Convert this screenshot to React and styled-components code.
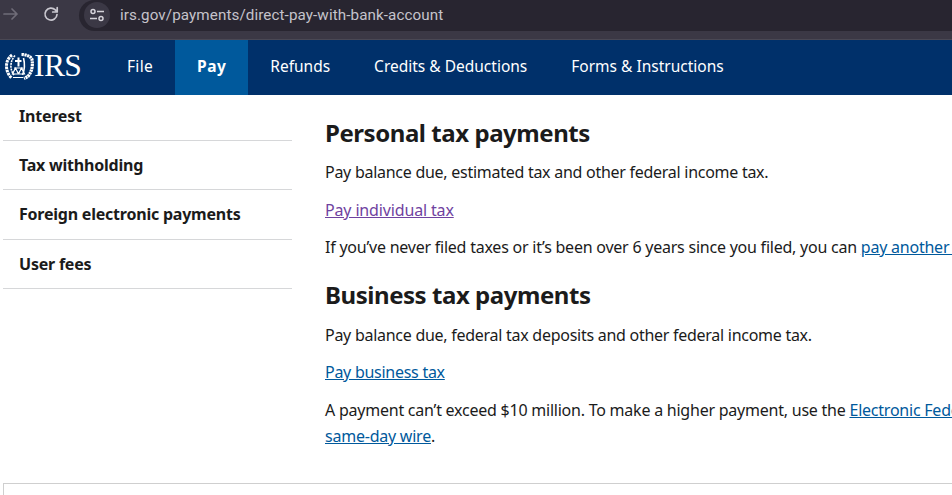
import React from 'react'
import styled, { createGlobalStyle } from 'styled-components'

const GlobalStyle = createGlobalStyle`
  html, body { margin: 0; padding: 0; background: #fff; overflow: hidden; }
  body { width: 952px; height: 495px; font-family: "Noto Sans", "Lato", sans-serif; color: #1b1b1b; }
  * { box-sizing: border-box; }
`

const Page = styled.div`
  width: 952px;
  height: 495px;
  display: flex;
  flex-direction: column;
  overflow: hidden;
`

const BrowserBar = styled.div`
  height: 40px;
  flex: none;
  background: #3b3845;
  display: flex;
  align-items: flex-start;
  padding-left: 2px;
  border-bottom: 1px solid #4a4854;
`

const BarIcon = styled.svg`
  width: 18px;
  height: 18px;
  margin-top: 5px;
  fill: none;
  stroke: ${p => p.$dim ? '#6f6c78' : '#c9c7cf'};
  stroke-width: 1.7;
  margin-right: ${p => p.$gap}px;
`

const UrlPill = styled.div`
  flex: 1;
  height: 31px;
  background: #282530;
  border-radius: 16px 0 0 16px;
  display: flex;
  align-items: center;
  padding: 0 0 2px 5px;
`

const SiteInfo = styled.div`
  width: 26px;
  height: 26px;
  border-radius: 50%;
  background: #3b3845;
  display: flex;
  align-items: center;
  justify-content: center;
  margin-right: 10px;
`

const UrlText = styled.span`
  font-family: "Roboto", sans-serif;
  font-size: 15.2px;
  letter-spacing: 0.1px;
  color: #c5c3cb;
`

const TopNav = styled.nav`
  height: 55px;
  flex: none;
  background: #00306a;
  display: flex;
  color: #fff;
`

const Logo = styled.div`
  width: 105px;
  display: flex;
  align-items: center;
  padding: 0 0 3px 5px;
`

const LogoText = styled.span`
  font-family: "Liberation Serif", serif;
  font-size: 31.5px;
  line-height: 1;
  letter-spacing: -0.6px;
`

const NavItem = styled.a`
  display: flex;
  align-items: center;
  padding: 0 22px 3px;
  font-size: 15.5px;
  letter-spacing: ${p => p.$spacing}px;
  font-weight: ${p => p.$active ? 700 : 400};
  background: ${p => p.$active ? '#00599c' : 'transparent'};
`

const Content = styled.div`
  display: flex;
  flex: 1;
  padding-left: 3px;
`

const Sidebar = styled.ul`
  list-style: none;
  margin: 0;
  padding: 0;
  width: 289px;
  flex: none;
`

const SideItem = styled.li`
  height: ${p => p.$h}px;
  border-bottom: 1px solid #d6d7d9;
  padding: ${p => p.$top}px 0 0 16px;
  font-size: 16px;
  letter-spacing: -0.22px;
  line-height: 20px;
  font-weight: 700;
`

const Main = styled.main`
  padding: 23px 0 0 33px;
  flex: 1;
  min-width: 0;
`

const Heading = styled.h2`
  margin: 0 0 ${p => p.$after}px;
  font-size: 24px;
  letter-spacing: -0.45px;
  line-height: 30px;
  font-weight: 700;
  white-space: nowrap;
`

const Para = styled.p`
  margin: 0 0 ${p => p.$after ?? 14}px;
  font-size: 16px;
  letter-spacing: ${p => p.$spacing ?? -0.27}px;
  line-height: ${p => p.$lh ?? 24}px;
  white-space: nowrap;
`

const TextLink = styled.a`
  color: ${p => p.$visited ? '#6f42a0' : '#00599c'};
  text-decoration: underline;
`

const FooterBox = styled.div`
  height: 12px;
  flex: none;
  margin-left: 3px;
  border: 1px solid #cfcfcf;
  border-right: 0;
  border-bottom: 0;
`

function Eagle() {
  return (
    <svg width="29" height="27" viewBox="0 0 29 27" fill="none" stroke="#fff">
      <path d="M7 2C3 5 1.500 9 1.500 13c0 5 2 9 5 12" strokeWidth="3" strokeDasharray="2.6 0.7" />
      <path d="M10 2.500C7 6 5.500 10 6 15c.5 3 1.500 5 3 7" strokeWidth="1.6" strokeDasharray="2 0.8" />
      <path d="M16.500 1.500c5 0 9.500 2 10.500 5 1 6 0 12-4 17l-4 2" strokeWidth="3.2" strokeDasharray="2.2 0.6" />
      <path d="M18.500 5c1.500 6 1.500 11-1 17" strokeWidth="1.6" />
      <path d="M10 8h6.500M13.500 4.500v9" strokeWidth="2" />
      <path d="M9 15h9M10.500 15l-3 6h6zM16.500 15l-3 6h6zM8 24.500h10" strokeWidth="1.2" />
    </svg>
  )
}

const sideItems = [
  { label: 'Interest', h: 46, top: 11 },
  { label: 'Tax withholding', h: 49, top: 14 },
  { label: 'Foreign electronic payments', h: 50, top: 14 },
  { label: 'User fees', h: 49, top: 14 },
]

const navItems = [
  { label: 'File', spacing: 0.3 },
  { label: 'Pay', spacing: 0.5, active: true },
  { label: 'Refunds', spacing: 0 },
  { label: 'Credits & Deductions', spacing: 0 },
  { label: 'Forms & Instructions', spacing: 0 },
]

export default function App() {
  return (
    <Page>
      <GlobalStyle />
      <BrowserBar>
        <BarIcon $dim $gap={22} viewBox="0 0 18 18" strokeLinecap="round" strokeLinejoin="round">
          <path d="M2 9h13M10 4l5 5-5 5" />
        </BarIcon>
        <BarIcon $gap={19} viewBox="0 0 18 18" strokeLinecap="round" strokeLinejoin="round">
          <path d="M15 9.500a6 6 0 1 1-1.700-4.600l1.700 1.800M15.200 2.500v4.500h-4.500" />
        </BarIcon>
        <UrlPill>
          <SiteInfo>
            <svg width="16" height="14" viewBox="0 0 16 14" fill="none" stroke="#d5d3da" strokeWidth="1.5">
              <circle cx="4" cy="3.500" r="2" />
              <path d="M8 3.500h7M1 10.500h7" />
              <circle cx="12" cy="10.500" r="2" />
            </svg>
          </SiteInfo>
          <UrlText>irs.gov/payments/direct-pay-with-bank-account</UrlText>
        </UrlPill>
      </BrowserBar>
      <TopNav>
        <Logo>
          <Eagle />
          <LogoText>IRS</LogoText>
        </Logo>
        {navItems.map(n => <NavItem key={n.label} $active={n.active} $spacing={n.spacing}>{n.label}</NavItem>)}
      </TopNav>
      <Content>
        <Sidebar>
          {sideItems.map(s => <SideItem key={s.label} $h={s.h} $top={s.top}>{s.label}</SideItem>)}
        </Sidebar>
        <Main>
          <Heading $after={12}>Personal tax payments</Heading>
          <Para>Pay balance due, estimated tax and other federal income tax.</Para>
          <Para $after={13} $spacing={-0.15}><TextLink $visited>Pay individual tax</TextLink></Para>
          <Para $after={21} $spacing={-0.23}>If you’ve never filed taxes or it’s been over 6 years since you filed, you can <TextLink>pay another way</TextLink>.</Para>
          <Heading $after={13}>Business tax payments</Heading>
          <Para $after={13}>Pay balance due, federal tax deposits and other federal income tax.</Para>
          <Para $after={13}><TextLink>Pay business tax</TextLink></Para>
          <Para $lh={26} $spacing={-0.23}>
            A payment can’t exceed $10 million. To make a higher payment, use the <TextLink>Electronic Federal Tax Payment System</TextLink><br />
            <TextLink>same-day wire</TextLink>.
          </Para>
        </Main>
      </Content>
      <FooterBox />
    </Page>
  )
}
